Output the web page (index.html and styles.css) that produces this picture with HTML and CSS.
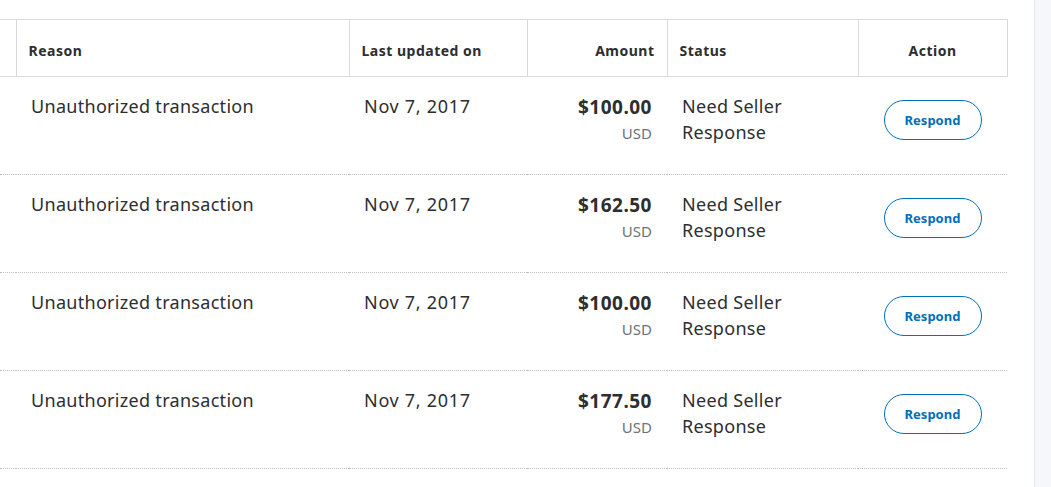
FILE: index.html
```html
<!DOCTYPE html>
<html>
<head>
<meta charset="utf-8">
<link rel="stylesheet" href="styles.css">
</head>
<body>
<div class="page">
  <main class="main">
    <table class="cases">
      <colgroup>
        <col class="c0"><col class="c1"><col class="c2"><col class="c3"><col class="c4"><col class="c5">
      </colgroup>
      <thead>
        <tr>
          <th></th>
          <th>Reason</th>
          <th class="date-h">Last updated on</th>
          <th class="num">Amount</th>
          <th>Status</th>
          <th class="center">Action</th>
        </tr>
      </thead>
      <tbody>
        <tr>
          <td></td>
          <td class="reason">Unauthorized transaction</td>
          <td class="date">Nov 7, 2017</td>
          <td class="num"><div class="amt">$100.00</div><div class="cur">USD</div></td>
          <td class="status">Need Seller<br>Response</td>
          <td class="center"><button class="btn">Respond</button></td>
        </tr>
        <tr>
          <td></td>
          <td class="reason">Unauthorized transaction</td>
          <td class="date">Nov 7, 2017</td>
          <td class="num"><div class="amt">$162.50</div><div class="cur">USD</div></td>
          <td class="status">Need Seller<br>Response</td>
          <td class="center"><button class="btn">Respond</button></td>
        </tr>
        <tr>
          <td></td>
          <td class="reason">Unauthorized transaction</td>
          <td class="date">Nov 7, 2017</td>
          <td class="num"><div class="amt">$100.00</div><div class="cur">USD</div></td>
          <td class="status">Need Seller<br>Response</td>
          <td class="center"><button class="btn">Respond</button></td>
        </tr>
        <tr>
          <td></td>
          <td class="reason">Unauthorized transaction</td>
          <td class="date">Nov 7, 2017</td>
          <td class="num"><div class="amt">$177.50</div><div class="cur">USD</div></td>
          <td class="status">Need Seller<br>Response</td>
          <td class="center"><button class="btn">Respond</button></td>
        </tr>
      </tbody>
    </table>
  </main>
  <aside class="side"></aside>
</div>
</body>
</html>
```

FILE: styles.css
```css
html, body {
  margin: 0;
  padding: 0;
  background: #fff;
}
body {
  font-family: "Noto Sans", "Open Sans", sans-serif;
  color: #2c2e2f;
}
.page {
  display: flex;
  height: 487px;
  overflow: hidden;
}
.main {
  width: 1034px;
  flex: none;
  padding-top: 19px;
}
.side {
  flex: 1;
  background: #f5f7fa;
  border-left: 1px solid #e3e6ea;
}
.cases {
  width: 1007px;
  border-collapse: collapse;
  table-layout: fixed;
}
.c0 { width: 16px; }
.c1 { width: 333px; }
.c2 { width: 178px; }
.c3 { width: 140px; }
.c4 { width: 191px; }
.c5 { width: 149px; }

thead th {
  height: 52px;
  border: 1px solid #d7dadd;
  padding: 4px 12px 0 12px;
  font-size: 14px;
  font-weight: 700;
  text-align: left;
  vertical-align: middle;
  color: #2c2e2f;
  letter-spacing: 0.5px;
}
thead th:first-child {
  border-left: none;
  padding: 0;
}
th.num, td.num { text-align: right; }
th.center, td.center { text-align: center; }

tbody td {
  height: 98px;
  box-sizing: border-box;
  padding: 16px 14px 0 14px;
  vertical-align: top;
  border-bottom: 1px dotted #b9c0c4;
  font-size: 18px;
  line-height: 26px;
  letter-spacing: 0.3px;
}
tbody td:first-child { padding: 0; }
td.reason { padding-left: 15px; }
td.date { padding-left: 15px; letter-spacing: 0.7px; }
td.num { padding-right: 15px; padding-top: 17px; }
.amt {
  font-size: 19px;
  font-weight: 700;
  line-height: 26px;
  letter-spacing: 0.5px;
}
.cur {
  font-size: 15px;
  color: #6c7378;
  line-height: 26px;
  letter-spacing: 0;
}
td.status { padding-left: 15px; }
.btn {
  display: inline-block;
  vertical-align: top;
  margin-top: 7px;
  width: 98px;
  height: 40px;
  border: 1px solid #0070ba;
  border-radius: 20px;
  background: #fff;
  color: #0070ba;
  font-family: "Noto Sans", "Open Sans", sans-serif;
  font-size: 13px;
  font-weight: 700;
  letter-spacing: 0;
  padding: 0;
  cursor: pointer;
}
```
